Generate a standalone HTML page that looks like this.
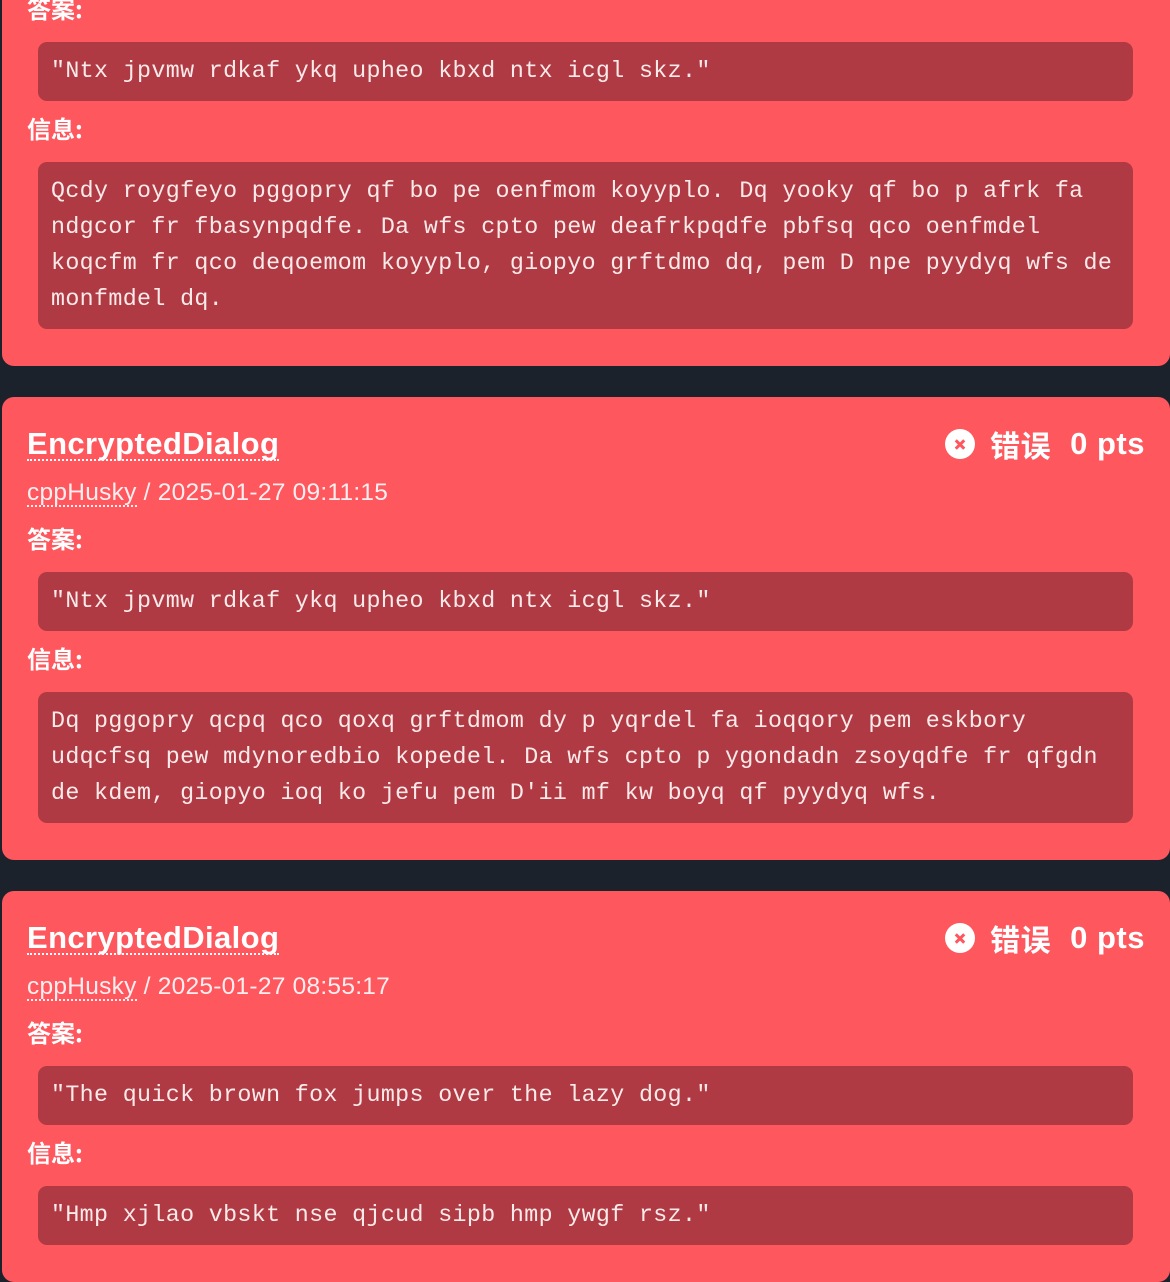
<!DOCTYPE html>
<html><head><meta charset="utf-8"><style>
*{margin:0;padding:0;box-sizing:border-box}
html,body{width:1170px;height:1282px;overflow:hidden;background:#1c222b}
body{position:relative;font-family:"Liberation Sans","Noto Sans CJK SC",sans-serif;color:#fff}
.card{position:absolute;left:2px;width:1168px;background:#ff575e;border-radius:12px;padding:25px 35px 37px 25px}
.title{height:44px;line-height:44px;font-size:31px;font-weight:bold;position:relative;letter-spacing:0.4px}
.title .t{border-bottom:2px dotted #fff;line-height:30px;display:inline-block}
.meta{margin-top:6px;height:42px;line-height:42px;font-size:24.5px;letter-spacing:0.25px;color:#ffeef0}
.meta span{border-bottom:2px dotted #ffeef0;line-height:24px;display:inline-block}
.lab{margin-top:6px;height:36px;line-height:36px;font-size:24px;font-weight:bold;font-family:"Noto Sans CJK SC",sans-serif}
.box{margin:16px 0 0 11px;width:1095px;background:#b03a43;border-radius:9px;padding:11px 12px 12px 13px;font-family:"Liberation Mono",monospace;font-size:23.3px;letter-spacing:0.36px;line-height:36px;color:#fbeaea;white-space:pre}
.lab2{margin-top:9px}
.right{position:absolute;right:-10px;top:0;height:44px;display:flex;align-items:center;font-size:31px;font-weight:bold;letter-spacing:0.5px}
.ic{width:30px;height:30px;border-radius:50%;background:#fff;margin-right:15px;position:relative}
.ic:before,.ic:after{content:"";position:absolute;left:9px;top:13.5px;width:12px;height:3px;background:#ff575e;transform:rotate(45deg)}
.ic:after{transform:rotate(-45deg)}
.cn{font-family:"Noto Sans CJK SC",sans-serif;margin-right:19px;font-size:30px}
</style></head><body>

<div class="card" style="top:-133px">
<div class="title"><span class="t">EncryptedDialog</span><div class="right"><div class="ic"></div><span class="cn">错误</span><span>0 pts</span></div></div>
<div class="meta"><span>cppHusky</span> / 2025-01-27 09:30:00</div>
<div class="lab">答案:</div>
<div class="box">"Ntx jpvmw rdkaf ykq upheo kbxd ntx icgl skz."</div>
<div class="lab lab2">信息:</div>
<div class="box">Qcdy roygfeyo pggopry qf bo pe oenfmom koyyplo. Dq yooky qf bo p afrk fa
ndgcor fr fbasynpqdfe. Da wfs cpto pew deafrkpqdfe pbfsq qco oenfmdel
koqcfm fr qco deqoemom koyyplo, giopyo grftdmo dq, pem D npe pyydyq wfs de
monfmdel dq.</div>
</div>

<div class="card" style="top:397px">
<div class="title"><span class="t">EncryptedDialog</span><div class="right"><div class="ic"></div><span class="cn">错误</span><span>0 pts</span></div></div>
<div class="meta"><span>cppHusky</span> / 2025-01-27 09:11:15</div>
<div class="lab">答案:</div>
<div class="box">"Ntx jpvmw rdkaf ykq upheo kbxd ntx icgl skz."</div>
<div class="lab lab2">信息:</div>
<div class="box">Dq pggopry qcpq qco qoxq grftdmom dy p yqrdel fa ioqqory pem eskbory
udqcfsq pew mdynoredbio kopedel. Da wfs cpto p ygondadn zsoyqdfe fr qfgdn
de kdem, giopyo ioq ko jefu pem D'ii mf kw boyq qf pyydyq wfs.</div>
</div>

<div class="card" style="top:891px">
<div class="title"><span class="t">EncryptedDialog</span><div class="right"><div class="ic"></div><span class="cn">错误</span><span>0 pts</span></div></div>
<div class="meta"><span>cppHusky</span> / 2025-01-27 08:55:17</div>
<div class="lab">答案:</div>
<div class="box">"The quick brown fox jumps over the lazy dog."</div>
<div class="lab lab2">信息:</div>
<div class="box">"Hmp xjlao vbskt nse qjcud sipb hmp ywgf rsz."</div>
</div>

</body></html>
